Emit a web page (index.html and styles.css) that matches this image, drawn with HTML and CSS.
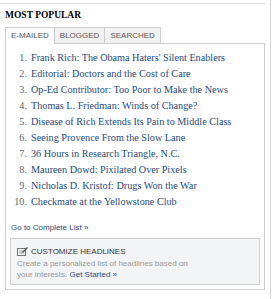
FILE: index.html
```html
<!DOCTYPE html>
<html lang="en">
<head>
    <meta charset="UTF-8">
    <meta name="viewport" content="width=device-width, initial-scale=1.0">
    <title>Most Popular</title>
    <link rel="stylesheet" href="styles.css">
</head>
<body>
    <div class="page">
        <div class="column">
            <h2 class="module-title">MOST POPULAR</h2>
            <ul class="tabs">
                <li class="tab selected">E-MAILED</li>
                <li class="tab">BLOGGED</li>
                <li class="tab">SEARCHED</li>
            </ul>
            <div class="tab-content">
                <ol class="headlines">
                    <li><span class="num">1.</span><a href="#">Frank Rich: The Obama Haters' Silent Enablers</a></li>
                    <li><span class="num">2.</span><a href="#">Editorial: Doctors and the Cost of Care</a></li>
                    <li><span class="num">3.</span><a href="#">Op-Ed Contributor: Too Poor to Make the News</a></li>
                    <li><span class="num">4.</span><a href="#">Thomas L. Friedman: Winds of Change?</a></li>
                    <li><span class="num">5.</span><a href="#">Disease of Rich Extends Its Pain to Middle Class</a></li>
                    <li><span class="num">6.</span><a href="#">Seeing Provence From the Slow Lane</a></li>
                    <li><span class="num">7.</span><a href="#">36 Hours in Research Triangle, N.C.</a></li>
                    <li><span class="num">8.</span><a href="#">Maureen Dowd: Pixilated Over Pixels</a></li>
                    <li><span class="num">9.</span><a href="#">Nicholas D. Kristof: Drugs Won the War</a></li>
                    <li><span class="num">10.</span><a href="#">Checkmate at the Yellowstone Club</a></li>
                </ol>
                <a class="more" href="#">Go to Complete List &raquo;</a>
                <div class="customize">
                    <div class="customize-title">
                        <svg class="icon" width="11" height="9" viewBox="0 0 11 9">
                            <rect x="0.5" y="1.5" width="8" height="7" fill="#fff" stroke="#777"/>
                            <line x1="2" y1="4" x2="6" y2="4" stroke="#999"/>
                            <line x1="2" y1="6" x2="7" y2="6" stroke="#999"/>
                            <path d="M5 5 L10 0 L11 1 L6 6 Z" fill="#555"/>
                        </svg>
                        CUSTOMIZE HEADLINES
                    </div>
                    <p class="customize-text">Create a personalized list of headlines based on your interests. <a href="#">Get Started &raquo;</a></p>
                </div>
            </div>
        </div>
        <div class="divider"></div>
    </div>
</body>
</html>
```

FILE: styles.css
```css
body {
    margin: 0;
    background-color: #ffffff;
    font-family: "Liberation Sans", Arial, sans-serif;
}
.page {
    display: flex;
    height: 299px;
}
.column {
    width: 260px;
    margin-top: 3px;
    padding-left: 5px;
    border-top: 1px solid #dddddd;
}
.divider {
    width: 1px;
    margin-left: 5px;
    background-color: #d4d4d4;
}
.module-title {
    margin: 5px 0 0;
    font-family: "Liberation Serif", Georgia, serif;
    font-size: 9.5px;
    font-weight: bold;
    color: #000000;
    line-height: 12px;
}
.tabs {
    display: flex;
    list-style: none;
    margin: 6px 0 0;
    padding: 0;
    position: relative;
    z-index: 1;
}
.tab {
    height: 15px;
    line-height: 15px;
    padding: 0 5px;
    border: 1px solid #cccccc;
    border-bottom: none;
    border-left: none;
    background-color: #f2f2f2;
    font-size: 8px;
    color: #555555;
}
.tab:first-child {
    border-left: 1px solid #cccccc;
}
.tab.selected {
    background-color: #ffffff;
    height: 16px;
    margin-bottom: -1px;
}
.tab-content {
    border: 1px solid #cccccc;
    height: 245px;
    padding: 0 4px;
}
.headlines {
    list-style: none;
    margin: 6px 0 0;
    padding: 0;
}
.headlines li {
    display: flex;
    height: 16px;
    line-height: 16px;
    font-family: "Liberation Serif", Georgia, serif;
    font-size: 10.2px;
}
.num {
    width: 17px;
    padding-right: 4px;
    text-align: right;
    color: #666666;
}
.headlines a {
    color: #1d4a7b;
    text-decoration: none;
}
.more {
    display: block;
    margin: 13px 0 0 1px;
    font-size: 8px;
    color: #1d4a7b;
    text-decoration: none;
}
.customize {
    margin-top: 6px;
    height: 45px;
    padding: 0 6px;
    border: 1px solid #d0d0d0;
    background-color: #f3f4f6;
}
.customize-title {
    display: flex;
    align-items: center;
    gap: 3px;
    margin-top: 8px;
    font-size: 8px;
    color: #333333;
}
.customize-text {
    margin: 2px 0 0;
    width: 180px;
    font-size: 8px;
    line-height: 11px;
    color: #999999;
}
.customize-text a {
    color: #1d4a7b;
    text-decoration: none;
}
```
